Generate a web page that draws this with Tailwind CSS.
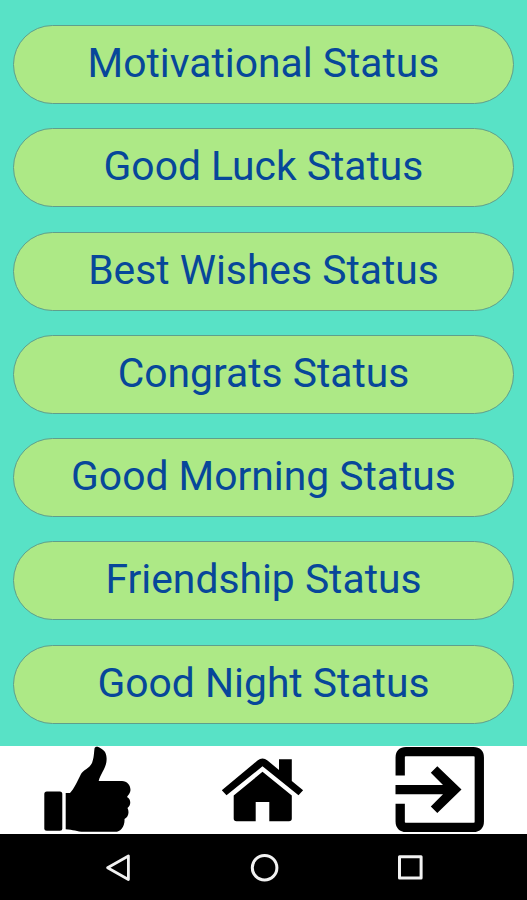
<!DOCTYPE html>
<html lang="en">
<head>
    <meta charset="UTF-8">
    <meta name="viewport" content="width=device-width, initial-scale=1.0">
    <title>Status</title>
    <script src="https://cdn.jsdelivr.net/npm/@tailwindcss/browser@4"></script>
</head>
<body class="bg-black font-['Roboto',sans-serif]">
    <div class="w-[527px] h-[900px] flex flex-col overflow-hidden">
        <!-- Status categories -->
        <main class="h-[746px] shrink-0 bg-[#58e2c6] pt-[25px] px-[13px] flex flex-col gap-[24.3px] text-[40.8px] leading-[48px] text-[#07479a]">
            <button class="h-[79px] shrink-0 pb-[3px] rounded-full border border-[#5f9f8c] bg-[#ade986]">Motivational Status</button>
            <button class="h-[79px] shrink-0 pb-[3px] rounded-full border border-[#5f9f8c] bg-[#ade986]">Good Luck Status</button>
            <button class="h-[79px] shrink-0 pb-[3px] rounded-full border border-[#5f9f8c] bg-[#ade986]">Best Wishes Status</button>
            <button class="h-[79px] shrink-0 pb-[3px] rounded-full border border-[#5f9f8c] bg-[#ade986]">Congrats Status</button>
            <button class="h-[79px] shrink-0 pb-[3px] rounded-full border border-[#5f9f8c] bg-[#ade986]">Good Morning Status</button>
            <button class="h-[79px] shrink-0 pb-[3px] rounded-full border border-[#5f9f8c] bg-[#ade986]">Friendship Status</button>
            <button class="h-[79px] shrink-0 pb-[3px] rounded-full border border-[#5f9f8c] bg-[#ade986]">Good Night Status</button>
        </main>

        <!-- App toolbar -->
        <nav class="h-[88px] shrink-0 bg-white grid grid-cols-3">
            <button class="flex items-center justify-center" aria-label="Like">
                <svg class="w-[88px] h-[88px]" viewBox="44 746 88 88">
                    <rect x="44.3" y="791.5" width="18" height="39.3" rx="2.5"/>
                    <path d="M65.7 793 H70 C74 789 77 782 81 774 C83 770 89 769 92 763 C94 758 94 752 94.5 748.5 C95 746 98 746 101 748.5 C106 751 107 756 106.5 761 C106 768 100 775 98.7 781 H122 C127 781 130.5 785 130.5 790 C130.5 793 128 795 127 797 C131 799 131.5 805 127.5 808 C129.5 812 128.5 817 124.5 819 C125 826 121 831.8 115 831.8 H84 C77 831.8 73 829.5 65.7 829.3 Z"/>
                </svg>
            </button>
            <button class="flex items-center justify-center" aria-label="Home">
                <svg class="w-[88px] h-[88px]" viewBox="219.5 746 88 88">
                    <path d="M222.3 790.3 L258 760.5 Q263 756.5 268 760.5 L279.5 770 V759.3 H292.3 V781 L303.6 790.3 L299 795.3 L263 766.3 L227 795.3 Z"/>
                    <path d="M263 771.8 L292.3 795.5 V818.5 Q292.3 821.3 289.5 821.3 H269.8 V802 H256.2 V821.3 H237 Q234.2 821.3 234.2 818.5 V795.5 Z"/>
                </svg>
            </button>
            <button class="flex items-center justify-center" aria-label="Exit">
                <svg class="w-[90px] h-[88px]" viewBox="394 746 90 88">
                    <path d="M400.2 775.5 V757.5 Q400.2 751.7 406 751.7 H473.5 Q479.3 751.7 479.3 757.5 V821.5 Q479.3 827.3 473.5 827.3 H406 Q400.2 827.3 400.2 821.5 V803.7" fill="none" stroke="#000" stroke-width="9.3"/>
                    <path d="M395.5 785 H443 L430.8 772.8 L437.3 766.3 L461.5 789.6 L437.3 813 L430.8 806.5 L443 794.3 H395.5 Z"/>
                </svg>
            </button>
        </nav>

        <!-- Android system bar -->
        <footer class="h-[66px] shrink-0 bg-black px-[90px] flex items-center justify-between">
            <svg class="w-14 h-14" viewBox="90 839 56 56" fill="none" stroke="#f2f2f2" stroke-width="2.8" stroke-linejoin="round">
                <path d="M128.400 856 V879.5 L107.6 867.7 Z"/>
            </svg>
            <svg class="w-14 h-14" viewBox="236 839 56 56" fill="none" stroke="#f2f2f2" stroke-width="3">
                <circle cx="264.6" cy="867.7" r="12.3"/>
            </svg>
            <svg class="w-14 h-14" viewBox="381 839 56 56" fill="none" stroke="#f2f2f2" stroke-width="3" stroke-linejoin="round">
                <rect x="399.5" y="856.8" width="21.6" height="21.2"/>
            </svg>
        </footer>
    </div>
</body>
</html>
